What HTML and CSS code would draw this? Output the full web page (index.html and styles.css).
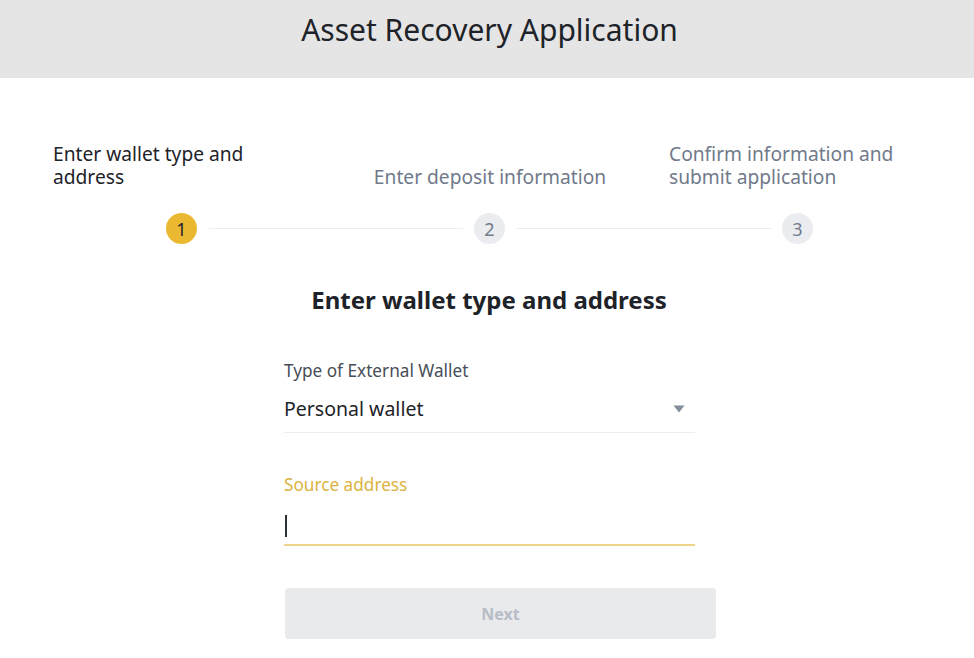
FILE: index.html
```html
<!DOCTYPE html>
<html lang="en">
<head>
<meta charset="utf-8">
<title>Asset Recovery Application</title>
<link rel="stylesheet" href="styles.css">
</head>
<body>
<header class="topbar">
  <h1 class="title">Asset Recovery Application</h1>
</header>
<main class="content">
  <div class="stepper">
    <div class="step step-active">
      <div class="step-label">Enter wallet type and address</div>
      <div class="step-track">
        <span class="track-line line-left track-hidden"></span>
        <span class="step-dot">1</span>
        <span class="track-line line-right"></span>
      </div>
    </div>
    <div class="step">
      <div class="step-label">Enter deposit information</div>
      <div class="step-track">
        <span class="track-line line-left"></span>
        <span class="step-dot">2</span>
        <span class="track-line line-right"></span>
      </div>
    </div>
    <div class="step">
      <div class="step-label">Confirm information and submit application</div>
      <div class="step-track">
        <span class="track-line line-left"></span>
        <span class="step-dot">3</span>
        <span class="track-line line-right track-hidden"></span>
      </div>
    </div>
  </div>

  <h2 class="form-title">Enter wallet type and address</h2>

  <form class="form">
    <div class="field">
      <div class="field-label">Type of External Wallet</div>
      <div class="select">
        <span class="select-value">Personal wallet</span>
        <svg class="select-caret" width="12" height="8" viewBox="0 0 12 8"><path d="M0.5 0.5 H11.5 L6 7.5 Z" fill="#848e9c"/></svg>
      </div>
    </div>
    <div class="field field-focus">
      <div class="field-label label-focus">Source address</div>
      <div class="input"><span class="caret-bar"></span></div>
    </div>
    <button type="button" class="btn-next">Next</button>
  </form>
</main>
</body>
</html>
```
FILE: styles.css
```css
* { box-sizing: border-box; }
html, body { margin: 0; padding: 0; }
body {
  width: 974px;
  height: 658px;
  overflow: hidden;
  background: #ffffff;
  font-family: "Noto Sans", "Open Sans", sans-serif;
  color: #1e2329;
}
.topbar {
  height: 78px;
  background: #e5e5e5;
  display: flex;
  justify-content: center;
  padding-top: 10px;
}
.title {
  margin: 0;
  font-size: 30px;
  font-weight: 400;
  line-height: 40px;
  color: #1e2329;
  padding-left: 5px;
}
.content {
  padding-top: 62px;
}
.stepper {
  display: grid;
  grid-template-columns: 308px 308px 308px;
  padding-left: 28px;
}
.step {
  display: flex;
  flex-direction: column;
  align-items: center;
}
.step-label {
  max-width: 258px;
  height: 48px;
  display: flex;
  align-items: flex-end;
  font-size: 19.2px;
  line-height: 23px;
  color: #707a8a;
}
.step-active .step-label { color: #1e2329; }
.step-track {
  width: 100%;
  display: flex;
  align-items: center;
  margin-top: 25px;
}
.track-line {
  flex: 1;
  height: 1px;
  background: #eaecef;
}
.line-left { margin-right: 11px; }
.line-right { margin-left: 12px; }
.track-hidden { visibility: hidden; }
.step-dot {
  width: 31px;
  height: 31px;
  border-radius: 50%;
  background: #eaecef;
  color: #707a8a;
  display: flex;
  align-items: center;
  justify-content: center;
  font-size: 18px;
}
.step-active .step-dot {
  background: #ebb931;
  color: #1e2329;
}
.form-title {
  margin: 41px 0 0;
  text-align: center;
  font-size: 24px;
  font-weight: 700;
  line-height: 30px;
  color: #1e2329;
  padding-left: 4px;
}
.form {
  width: 431px;
  margin: 0 0 0 284px;
  padding-top: 46px;
}
.field { width: 411px; }
.field-label {
  font-size: 17.2px;
  line-height: 20px;
  color: #474d57;
}
.select {
  display: flex;
  align-items: center;
  justify-content: space-between;
  height: 52px;
  padding-top: 4px;
  border-bottom: 1px solid #eaecef;
  padding-right: 10px;
}
.select-value {
  font-size: 19.5px;
  color: #1e2329;
}
.field-focus { margin-top: 42px; }
.label-focus {
  color: #dcb33f;
  font-size: 17.2px;
}
.input {
  height: 51px;
  border-bottom: 2px solid #efd58a;
  display: flex;
  align-items: center;
  padding-top: 12px;
}
.caret-bar {
  width: 2px;
  height: 22px;
  background: #2b2f36;
  margin-left: 1px;
}
.btn-next {
  display: block;
  width: 431px;
  height: 51px;
  margin-top: 42px;
  margin-left: 1px;
  border: none;
  border-radius: 4px;
  background: #e9eaec;
  color: #b7bdc6;
  font-family: inherit;
  font-size: 16px;
  font-weight: 700;
}
```
